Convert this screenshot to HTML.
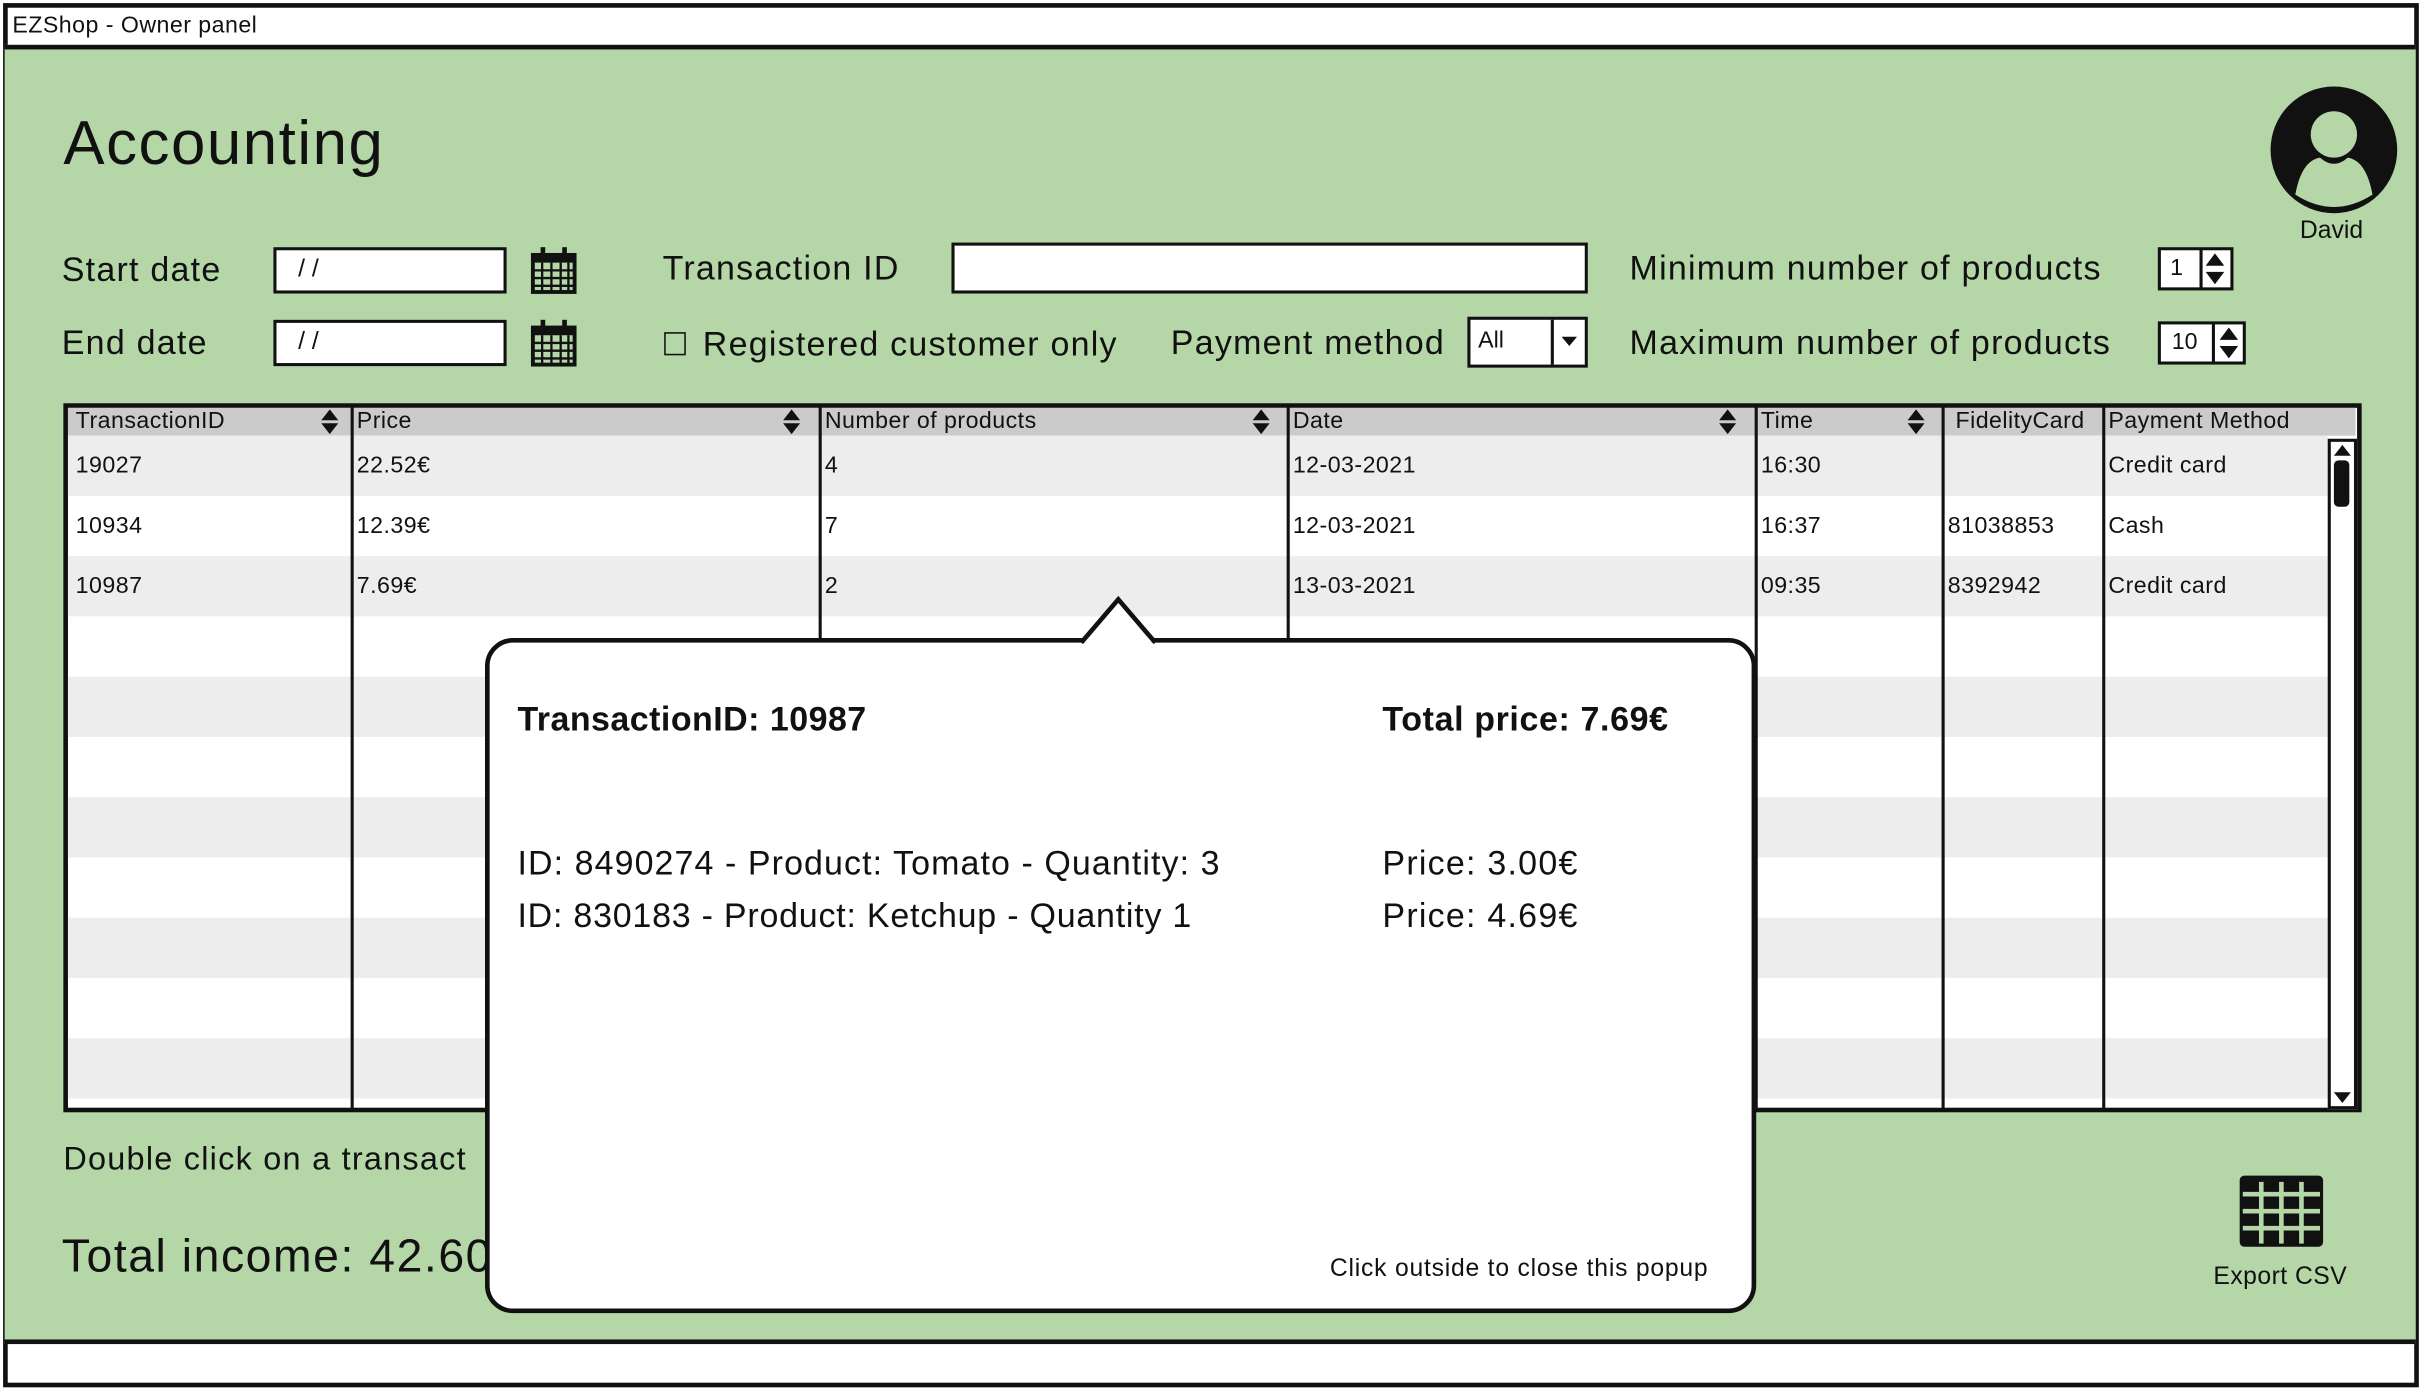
<!DOCTYPE html>
<html><head><meta charset="utf-8"><style>
*{margin:0;padding:0;box-sizing:border-box}
html,body{width:2422px;height:1392px;overflow:hidden;background:#fff}
#s{position:absolute;left:0;top:0;width:1568px;height:901px;transform:scale(1.5446,1.5449);transform-origin:0 0;font-family:"Liberation Sans",sans-serif;color:#111}
.a{position:absolute;white-space:nowrap;line-height:1}
.w{letter-spacing:0.8px}
.box{position:absolute;background:#fff;border:2.5px solid #111}
.row{position:absolute;left:44px;width:1463px;height:39px}
.vl{position:absolute;top:262px;height:457px;width:2px;background:#111}
.c{position:absolute;font-size:15px;line-height:1;letter-spacing:0.3px}
</style></head><body><div id="s">
<div style="position:absolute;left:2px;top:2px;width:1564px;height:896px;border:3px solid #111;background:#fff"></div>
<div class="a" style="left:8px;top:9px;font-size:15px;letter-spacing:0.3px">EZShop - Owner panel</div>
<div style="position:absolute;left:3px;top:29px;width:1561px;height:841px;background:#b5d6a7;border-top:3px solid #111;border-bottom:3px solid #111"></div>

<div class="a" style="left:41px;top:73px;font-size:40px;letter-spacing:1px">Accounting</div>

<svg style="position:absolute;left:1466px;top:54px" width="90" height="90" viewBox="0 0 90 90">
<ellipse cx="45" cy="43" rx="41" ry="41" fill="#111"/>
<circle cx="45" cy="33" r="15" fill="#b5d6a7"/>
<path d="M20 72 Q24 50 36 48 Q45 56 54 48 Q66 50 70 72 Q45 88 20 72Z" fill="#b5d6a7"/>
</svg>
<div class="a" style="left:1489px;top:142px;font-size:16px">David</div>

<div class="a w" style="left:40px;top:164px;font-size:22px">Start date</div>
<div class="box" style="left:177px;top:160px;width:151px;height:30px"></div>
<div class="a" style="left:193px;top:167px;font-size:16px">/ /</div>
<div class="a w" style="left:40px;top:211px;font-size:22px">End date</div>
<div class="box" style="left:177px;top:207px;width:151px;height:30px"></div>
<div class="a" style="left:193px;top:214px;font-size:16px">/ /</div>
<svg style="position:absolute;left:343px;top:159px" width="31" height="32" viewBox="0 0 31 32"><rect x="2" y="6" width="27" height="24" fill="none" stroke="#111" stroke-width="2.5"/><rect x="2" y="6" width="27" height="5" fill="#111"/><path d="M2 16H29M2 21H29M2 26H29M8 11V30M14 11V30M20 11V30M25 11V30" stroke="#111" stroke-width="1.5"/><rect x="7" y="1" width="3" height="8" fill="#111"/><rect x="21" y="1" width="3" height="8" fill="#111"/></svg>
<svg style="position:absolute;left:343px;top:206px" width="31" height="32" viewBox="0 0 31 32"><rect x="2" y="6" width="27" height="24" fill="none" stroke="#111" stroke-width="2.5"/><rect x="2" y="6" width="27" height="5" fill="#111"/><path d="M2 16H29M2 21H29M2 26H29M8 11V30M14 11V30M20 11V30M25 11V30" stroke="#111" stroke-width="1.5"/><rect x="7" y="1" width="3" height="8" fill="#111"/><rect x="21" y="1" width="3" height="8" fill="#111"/></svg>

<div class="a w" style="left:429px;top:163px;font-size:22px">Transaction ID</div>
<div class="box" style="left:616px;top:157px;width:412px;height:33px"></div>
<div style="position:absolute;left:430px;top:215px;width:14px;height:15px;border:1.5px solid #111"></div>
<div class="a w" style="left:455px;top:212px;font-size:22px">Registered customer only</div>
<div class="a w" style="left:758px;top:211px;font-size:22px">Payment method</div>
<div class="box" style="left:950px;top:205px;width:78px;height:33px;border-width:2px"></div>
<div class="a" style="left:957px;top:213px;font-size:15px">All</div>
<div style="position:absolute;left:1004px;top:207px;width:2px;height:29px;background:#111"></div>
<div style="position:absolute;left:1011px;top:218px;border-left:5px solid transparent;border-right:5px solid transparent;border-top:6px solid #111"></div>

<div class="a w" style="left:1055px;top:163px;font-size:22px">Minimum number of products</div>
<div class="a w" style="left:1055px;top:211px;font-size:22px">Maximum number of products</div>
<div class="box" style="left:1397px;top:160px;width:49px;height:28px;border-width:2px"></div>
<div class="a" style="left:1405px;top:166px;font-size:15px">1</div>
<div style="position:absolute;left:1424px;top:161px;width:2px;height:26px;background:#111"></div>
<svg style="position:absolute;left:1427px;top:163px" width="14" height="22"><path d="M7 1L13 9H1Z M7 21L13 13H1Z" fill="#111"/></svg>
<div class="box" style="left:1397px;top:208px;width:57px;height:28px;border-width:2px"></div>
<div class="a" style="left:1406px;top:214px;font-size:15px">10</div>
<div style="position:absolute;left:1432px;top:209px;width:2px;height:26px;background:#111"></div>
<svg style="position:absolute;left:1436px;top:211px" width="14" height="22"><path d="M7 1L13 9H1Z M7 21L13 13H1Z" fill="#111"/></svg>

<div style="position:absolute;left:41px;top:261px;width:1488px;height:459px;background:#fff;border:3px solid #111"></div>
<div style="position:absolute;left:44px;top:264px;width:1481px;height:18px;background:#cbcbcb"></div>
<div class="row" style="top:282px;background:#ededed"></div>
<div class="row" style="top:360px;background:#ededed"></div>
<div class="row" style="top:438px;background:#ededed"></div>
<div class="row" style="top:516px;background:#ededed"></div>
<div class="row" style="top:594px;background:#ededed"></div>
<div class="row" style="top:672px;background:#ededed"></div>
<div class="vl" style="left:227px"></div>
<div class="vl" style="left:530px"></div>
<div class="vl" style="left:833px"></div>
<div class="vl" style="left:1136px"></div>
<div class="vl" style="left:1257px"></div>
<div class="vl" style="left:1361px"></div>
<div class="c" style="left:49px;top:265px">TransactionID</div>
<div class="c" style="left:231px;top:265px">Price</div>
<div class="c" style="left:534px;top:265px">Number of products</div>
<div class="c" style="left:837px;top:265px">Date</div>
<div class="c" style="left:1140px;top:265px">Time</div>
<div class="c" style="left:1266px;top:265px">FidelityCard</div>
<div class="c" style="left:1365px;top:265px">Payment Method</div>
<svg style="position:absolute;left:207px;top:265px" width="13" height="16"><path d="M6.5 0L12 7H1Z M6.5 16L12 9H1Z" fill="#111"/></svg>
<svg style="position:absolute;left:506px;top:265px" width="13" height="16"><path d="M6.5 0L12 7H1Z M6.5 16L12 9H1Z" fill="#111"/></svg>
<svg style="position:absolute;left:810px;top:265px" width="13" height="16"><path d="M6.5 0L12 7H1Z M6.5 16L12 9H1Z" fill="#111"/></svg>
<svg style="position:absolute;left:1112px;top:265px" width="13" height="16"><path d="M6.5 0L12 7H1Z M6.5 16L12 9H1Z" fill="#111"/></svg>
<svg style="position:absolute;left:1234px;top:265px" width="13" height="16"><path d="M6.5 0L12 7H1Z M6.5 16L12 9H1Z" fill="#111"/></svg>
<div class="c" style="left:49px;top:294px">19027</div><div class="c" style="left:231px;top:294px">22.52€</div><div class="c" style="left:534px;top:294px">4</div><div class="c" style="left:837px;top:294px">12-03-2021</div><div class="c" style="left:1140px;top:294px">16:30</div><div class="c" style="left:1365px;top:294px">Credit card</div>
<div class="c" style="left:49px;top:333px">10934</div><div class="c" style="left:231px;top:333px">12.39€</div><div class="c" style="left:534px;top:333px">7</div><div class="c" style="left:837px;top:333px">12-03-2021</div><div class="c" style="left:1140px;top:333px">16:37</div><div class="c" style="left:1261px;top:333px">81038853</div><div class="c" style="left:1365px;top:333px">Cash</div>
<div class="c" style="left:49px;top:372px">10987</div><div class="c" style="left:231px;top:372px">7.69€</div><div class="c" style="left:534px;top:372px">2</div><div class="c" style="left:837px;top:372px">13-03-2021</div><div class="c" style="left:1140px;top:372px">09:35</div><div class="c" style="left:1261px;top:372px">8392942</div><div class="c" style="left:1365px;top:372px">Credit card</div>
<div style="position:absolute;left:1507px;top:284px;width:19px;height:434px;background:#fff;border:2px solid #111"></div>
<svg style="position:absolute;left:1510px;top:287px" width="13" height="10"><path d="M6.5 1L12 8H1Z" fill="#111"/></svg>
<div style="position:absolute;left:1511px;top:298px;width:10px;height:30px;background:#111;border-radius:3px"></div>
<svg style="position:absolute;left:1510px;top:705px" width="13" height="10"><path d="M6.5 9L12 2H1Z" fill="#111"/></svg>

<div class="a w" style="left:41px;top:740px;font-size:21px">Double click on a transact</div>
<div class="a" style="left:40px;top:799px;font-size:30px;letter-spacing:1px">Total income: 42.60</div>

<svg style="position:absolute;left:1448px;top:759px" width="58" height="50" viewBox="0 0 58 50"><rect x="2" y="2" width="54" height="46" rx="3" fill="#111"/><path d="M4 14H54M4 25H54M4 36H54M16 6V46M29 6V46M42 6V46" stroke="#b5d6a7" stroke-width="3"/></svg>
<div class="a" style="left:1433px;top:819px;font-size:16px;letter-spacing:0.3px">Export CSV</div>

<div style="position:absolute;left:314px;top:413px;width:823px;height:437px;background:#fff;border:3px solid #111;border-radius:18px"></div>
<svg style="position:absolute;left:698px;top:384px" width="56" height="34"><path d="M2 32L26 4L50 32" fill="#fff" stroke="#111" stroke-width="3"/><rect x="6" y="30" width="40" height="5" fill="#fff"/></svg>
<div class="a" style="left:335px;top:455px;font-size:22px;font-weight:bold;letter-spacing:0.3px">TransactionID: 10987</div>
<div class="a" style="left:895px;top:455px;font-size:22px;font-weight:bold;letter-spacing:0.4px">Total price: 7.69€</div>
<div class="a" style="left:335px;top:548px;font-size:22px;letter-spacing:0.7px">ID: 8490274 - Product: Tomato - Quantity: 3</div>
<div class="a" style="left:335px;top:582px;font-size:22px;letter-spacing:0.5px">ID: 830183 - Product: Ketchup - Quantity 1</div>
<div class="a" style="left:895px;top:548px;font-size:22px;letter-spacing:0.8px">Price: 3.00€</div>
<div class="a" style="left:895px;top:582px;font-size:22px;letter-spacing:0.8px">Price: 4.69€</div>
<div class="a" style="left:861px;top:814px;font-size:16px;letter-spacing:0.5px">Click outside to close this popup</div>
</div></body></html>
